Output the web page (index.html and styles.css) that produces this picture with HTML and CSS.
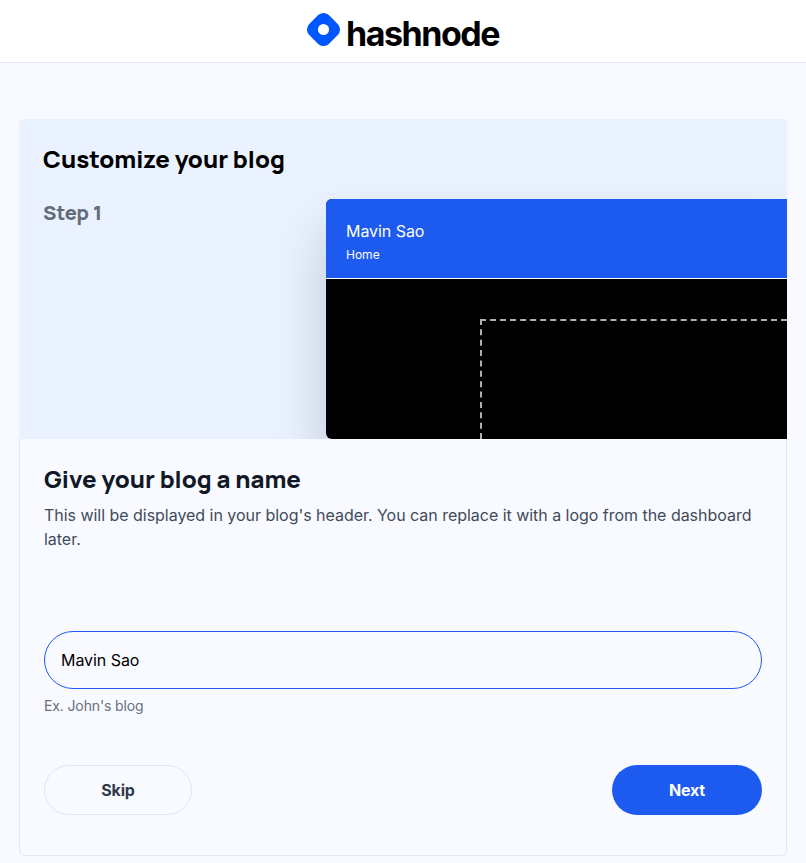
FILE: index.html
```html
<!DOCTYPE html>
<html lang="en">
<head>
<meta charset="utf-8">
<title>Customize your blog</title>
<link rel="stylesheet" href="styles.css">
</head>
<body>
<header class="topbar">
  <svg class="mark" width="33" height="33" viewBox="0 0 32 32"><path fill="#0057ff" fill-rule="evenodd" d="M2.2 10.6 10.6 2.2a7.7 7.7 0 0 1 10.8 0l8.4 8.4a7.7 7.7 0 0 1 0 10.8l-8.4 8.4a7.7 7.7 0 0 1-10.8 0l-8.4-8.4a7.7 7.7 0 0 1 0-10.8ZM16 21.4a5.4 5.4 0 1 0 0-10.8 5.4 5.4 0 0 0 0 10.8Z"/></svg>
  <span class="wordmark">hashnode</span>
</header>
<main class="card">
  <section class="hero">
    <div class="intro">
      <h1>Customize your blog</h1>
      <p class="step">Step 1</p>
    </div>
    <div class="preview">
      <div class="preview-head">
        <div class="preview-name">Mavin Sao</div>
        <div class="preview-nav">Home</div>
      </div>
      <div class="preview-body"><div class="placeholder"></div></div>
    </div>
  </section>
  <form class="form">
    <h2>Give your blog a name</h2>
    <p class="desc">This will be displayed in your blog's header. You can replace it with a logo from the dashboard later.</p>
    <input class="field" type="text" value="Mavin Sao" aria-label="Blog name">
    <p class="hint">Ex. John's blog</p>
    <div class="actions">
      <button class="btn skip" type="button">Skip</button>
      <button class="btn next" type="button">Next</button>
    </div>
  </form>
</main>
</body>
</html>
```
FILE: styles.css
```css
* { box-sizing: border-box; }
body { margin: 0; height: 863px; overflow: hidden; background: #f9faff; font-family: Inter, "Liberation Sans", sans-serif; }
h1, h2, p { margin: 0; }
.topbar { height: 63px; display: flex; justify-content: center; background: #fff; border-bottom: 1px solid #e2e8f0; }
.mark { margin-top: 12.5px; flex: none; }
.wordmark { margin: 12px 0 0 6px; font-size: 34px; line-height: 44px; font-weight: 700; letter-spacing: -1.48px; color: #000; }
.card { margin: 56px 19px 0; height: 737px; border: 1px solid #e2e8f0; border-radius: 6px; }
.hero { margin: -1px -1px 0; height: 320px; display: flex; background: #eaf2ff; border-radius: 6px 6px 0 0; overflow: hidden; }
.intro { width: 307px; flex: none; padding: 24px 0 0 24px; white-space: nowrap; }
h1, h2, .step { font-family: Manrope, Inter, sans-serif; font-weight: 800; }
h1 { font-size: 24px; line-height: 32px; letter-spacing: 0; color: #000; }
.step { margin-top: 24px; font-size: 20px; line-height: 28px; letter-spacing: 0; color: #646b79; }
.preview { margin-top: 80px; height: 240px; flex: 1; border-radius: 6px 0 0 6px; background: #000; box-shadow: 0 32px 54px rgba(50, 68, 72, .24); overflow: hidden; }
.preview-head { height: 80px; padding: 20px; background: #1d5bf0; border-bottom: 1px solid #fff; color: #fff; }
.preview-name { font-size: 16px; line-height: 24px; letter-spacing: -.05px; }
.preview-nav { margin-top: 4px; font-size: 12px; line-height: 16px; }
.preview-body { padding: 40px 0 0 154px; }
.placeholder { height: 120px; border: 2px dashed #a9b0b7; border-width: 2px 0 0 2px; }
.form { padding: 24px; }
h2 { font-size: 24px; line-height: 32px; letter-spacing: 0; color: #111827; }
.desc { margin-top: 8px; font-size: 16px; line-height: 24px; letter-spacing: -.03px; color: #414b5a; }
.field { display: block; width: 100%; height: 58px; margin-top: 80px; padding: 0 16px; border: 1px solid #1d5bf0; border-radius: 29px; background: transparent; font: 16px Inter, sans-serif; letter-spacing: -.05px; color: #000; outline: none; }
.hint { margin-top: 7px; font-size: 14px; line-height: 20px; letter-spacing: -.13px; color: #66707e; }
.actions { display: flex; justify-content: space-between; margin-top: 49px; }
.btn { height: 50px; border-radius: 25px; font: 700 16px Inter, sans-serif; letter-spacing: -.15px; }
.skip { width: 148px; border: 1px solid #e2e4e9; background: transparent; color: #2f3b4b; }
.next { width: 150px; border: 0; background: #1d5bf0; color: #fff; }
```
